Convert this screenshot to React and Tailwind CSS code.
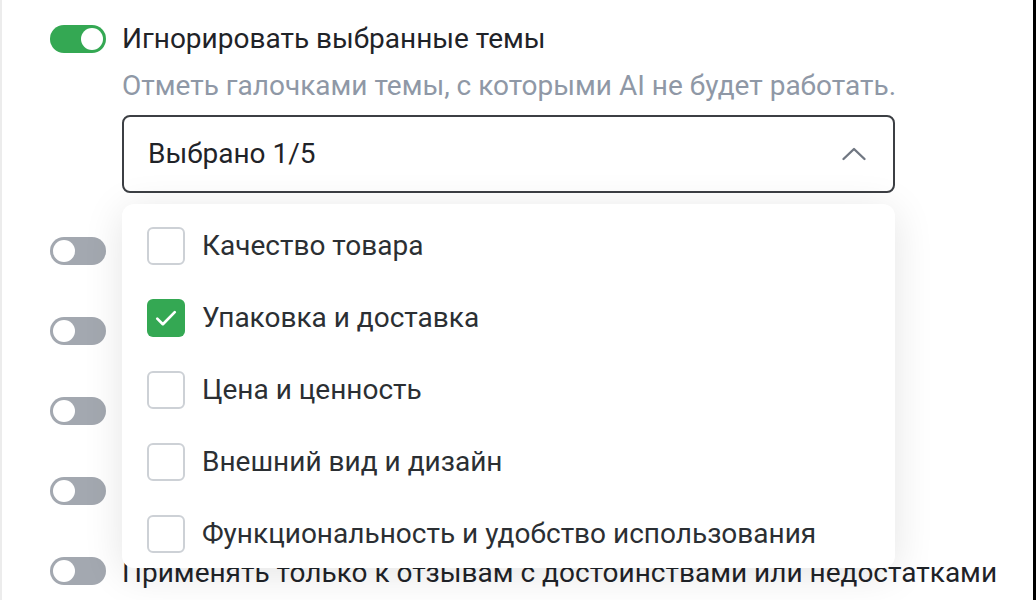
import React from 'react';

const topics = [
    { label: 'Качество товара', checked: false },
    { label: 'Упаковка и доставка', checked: true },
    { label: 'Цена и ценность', checked: false },
    { label: 'Внешний вид и дизайн', checked: false },
    { label: 'Функциональность и удобство использования', checked: false },
];

// rows behind the open dropdown; only the last label is visible
const otherSettings = ['', '', '', '', 'Применять только к отзывам с достоинствами или недостатками'];

function Toggle({ on }) {
    return (
        <div className={`w-[56px] h-[28px] rounded-full flex items-center px-[3px] shrink-0 ${on ? 'bg-[#34a853] justify-end' : 'bg-[#a3a8b0] justify-start'}`}>
            <div className="w-[22px] h-[22px] rounded-full bg-white" />
        </div>
    );
}

function Checkbox({ checked }) {
    if (checked) {
        return (
            <div className="w-[38px] h-[38px] rounded-[6px] bg-[#34a853] flex items-center justify-center shrink-0">
                <svg width="28" height="28" viewBox="0 0 24 24" fill="none" stroke="white" strokeWidth="2.3" strokeLinecap="round" strokeLinejoin="round">
                    <path d="M4.5 12.5l4.8 4.8L19.5 7" />
                </svg>
            </div>
        );
    }
    return <div className="w-[38px] h-[38px] rounded-[6px] border-2 border-[#cdd1d6] bg-white shrink-0" />;
}

export default function App() {
    return (
        <div className="w-[1036px] h-[600px] bg-white flex overflow-hidden" style={{ fontFamily: 'Roboto, "Noto Sans", sans-serif' }}>
            <div className="w-[2px] bg-[#ececec] shrink-0" />
            <div className="flex-1 relative pl-[48px] pt-[25px]">
                {/* Active setting */}
                <div className="flex items-center gap-[16px]">
                    <Toggle on />
                    <span className="text-[28px] leading-[28px] text-[#1f2328]">Игнорировать выбранные темы</span>
                </div>
                <div className="pl-[72px]">
                    <p className="mt-[18px] text-[28px] leading-[30px] text-[#8f98a6] whitespace-nowrap">Отметь галочками темы, с которыми AI не будет работать.</p>
                    <div className="mt-[14px] w-[773px] h-[78px] border-2 border-[#3c3f44] rounded-[8px] flex items-center justify-between pl-[24px] pr-[26px]">
                        <span className="text-[28px] text-[#1f2328]">Выбрано 1/5</span>
                        <svg width="26" height="16" viewBox="0 0 26 16" fill="none" stroke="#707782" strokeWidth="2.4" strokeLinecap="round" strokeLinejoin="round">
                            <path d="M2.5 13L13 3l10.5 10" />
                        </svg>
                    </div>
                </div>

                {/* Other settings (covered by dropdown) */}
                <div className="mt-[44px] flex flex-col gap-[52px]">
                    {otherSettings.map((s, i) => (
                        <div key={i} className="flex items-center gap-[16px] h-[28px]">
                            <Toggle />
                            {s && <span className="text-[28px] leading-[28px] text-[#1f2328] whitespace-nowrap translate-y-[2px]">{s}</span>}
                        </div>
                    ))}
                </div>

                {/* Dropdown */}
                <div className="absolute left-[120px] top-[204px] w-[773px] h-[364px] bg-white rounded-[12px] shadow-[0_6px_40px_rgba(0,0,0,0.11)] pl-[25px] pt-[23px] flex flex-col gap-[34px]">
                    {topics.map((t) => (
                        <div key={t.label} className="flex items-center gap-[17px]">
                            <Checkbox checked={t.checked} />
                            <span className="text-[28px] leading-[38px] text-[#2b2f33] whitespace-nowrap">{t.label}</span>
                        </div>
                    ))}
                </div>
            </div>
            <div className="w-[3px] bg-black shrink-0" />
        </div>
    );
}
